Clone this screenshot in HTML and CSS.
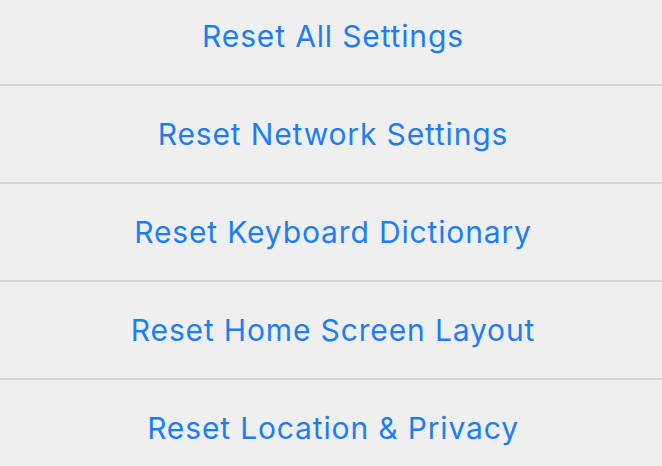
FILE: index.html
```html
<!DOCTYPE html>
<html>
<head>
<meta charset="utf-8">
<link rel="stylesheet" href="styles.css">
</head>
<body>
<div class="list">
  <div class="row">Reset All Settings</div>
  <div class="row">Reset Network Settings</div>
  <div class="row">Reset Keyboard Dictionary</div>
  <div class="row">Reset Home Screen Layout</div>
  <div class="row">Reset Location &amp; Privacy</div>
</div>
</body>
</html>
```
FILE: styles.css
```css
html, body {
  margin: 0;
  padding: 0;
  background: #efefef;
  overflow: hidden;
}
.list {
  margin-top: -12px;
  display: flex;
  flex-direction: column;
}
.row {
  height: 96px;
  border-bottom: 2px solid #d5d5d5;
  display: flex;
  align-items: center;
  justify-content: center;
  padding-left: 4px;
  font-family: Inter, "Noto Sans", sans-serif;
  font-size: 30px;
  color: #1c7ef2;
  letter-spacing: 0.85px;
}
```
